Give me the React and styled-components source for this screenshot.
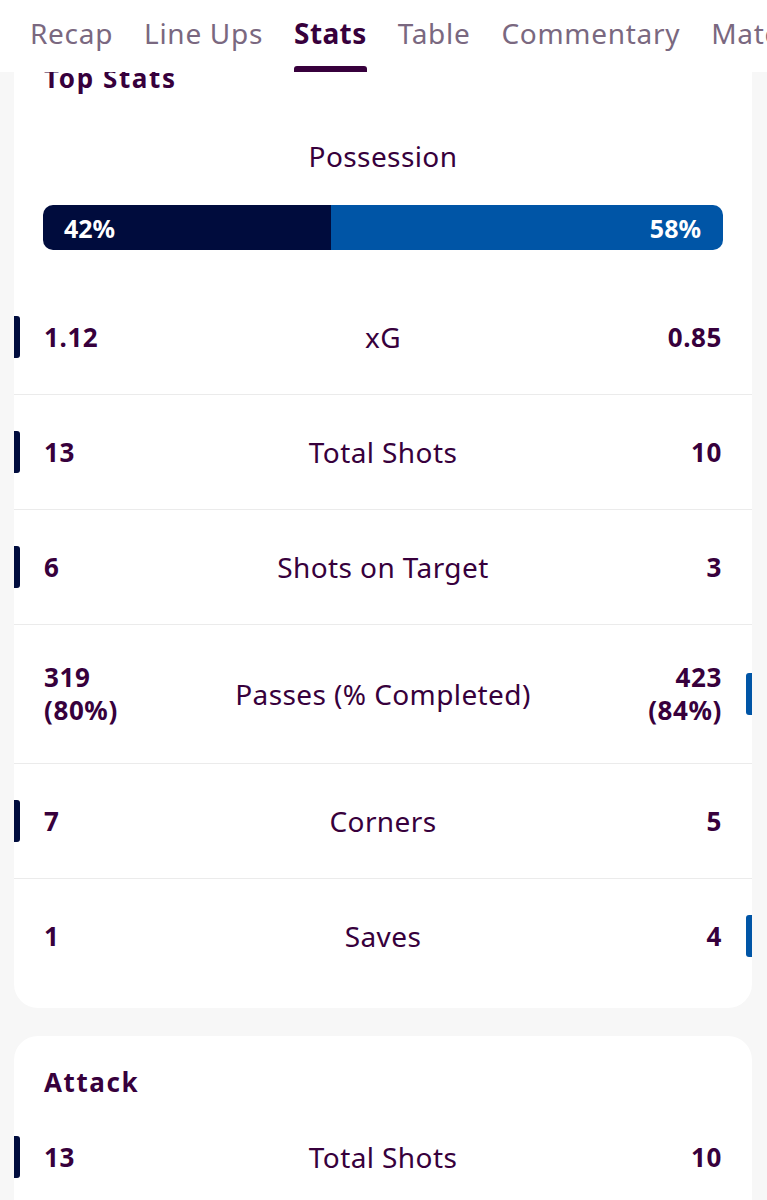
import React from "react";
import styled, { createGlobalStyle } from "styled-components";

const Global = createGlobalStyle`
  html, body { margin: 0; padding: 0; background: #f7f7f7; }
  body { font-family: "Noto Sans", "Liberation Sans", sans-serif; color: #37003c; }
  * { box-sizing: border-box; }
`;

const Page = styled.div`
  width: 767px;
  background: #f7f7f7;
`;

const TabBar = styled.nav`
  height: 72px;
  background: #ffffff;
  display: flex;
  gap: 31px;
  padding-left: 30px;
  overflow: hidden;
  white-space: nowrap;
`;

const Tab = styled.div`
  height: 72px;
  display: flex;
  flex-direction: column;
  padding-top: 15px;
  font-size: 28px;
  line-height: 36px;
  letter-spacing: ${(p) => (p.$active ? "0.4px" : "0.7px")};
  font-weight: ${(p) => (p.$active ? 700 : 400)};
  color: ${(p) => (p.$active ? "#37003c" : "#7a6880")};
  flex-shrink: 0;
`;

const Underline = styled.span`
  margin-top: auto;
  height: 6px;
  border-radius: 3px 3px 0 0;
  background: #37003c;
`;

const Scroller = styled.div`
  overflow: hidden;
`;

const Content = styled.div`
  margin-top: -40px;
  display: flex;
  flex-direction: column;
  gap: 28px;
  padding: 0 15px 40px 14px;
`;

const Card = styled.section`
  background: #ffffff;
  border-radius: 24px;
  padding: 30px 0 15px;
`;

const Heading = styled.h2`
  margin: 0;
  padding-left: 30px;
  font-size: 26px;
  line-height: 32px;
  letter-spacing: 1.6px;
  font-weight: 700;
  color: #37003c;
`;

const Possession = styled.div`
  padding: 44px 29px 0;
  display: flex;
  flex-direction: column;
  align-items: center;
  gap: 31px;
`;

const Label = styled.div`
  font-size: 28px;
  line-height: 36px;
  letter-spacing: 0.4px;
  font-weight: 400;
  color: #37003c;
  text-align: center;
`;

const Bar = styled.div`
  width: 100%;
  height: 45px;
  border-radius: 10px;
  overflow: hidden;
  display: flex;
`;

const Segment = styled.div`
  background: ${(p) => p.$color};
  display: flex;
  align-items: center;
  justify-content: ${(p) => (p.$right ? "flex-end" : "flex-start")};
  padding: 0 22px 0 21px;
  color: #ffffff;
  font-weight: 700;
  font-size: 25px;
`;

const Rows = styled.div`
  margin-top: ${(p) => p.$offset || 0}px;
`;

const Row = styled.div`
  display: grid;
  grid-template-columns: 6px 1fr auto 1fr 6px;
  column-gap: 24px;
  align-items: center;
  min-height: 114px;
  padding: 36px 0;
  border-bottom: 1px solid #ebebeb;
  &:last-child { border-bottom: none; }
`;

const Indicator = styled.span`
  height: 42px;
  width: 6px;
  background: ${(p) => (p.$show ? p.$color : "transparent")};
  border-radius: ${(p) => (p.$right ? "3px 0 0 3px" : "0 3px 3px 0")};
`;

const Value = styled.div`
  font-size: 26px;
  line-height: 33px;
  letter-spacing: 0.6px;
  font-weight: 700;
  color: #37003c;
  text-align: ${(p) => (p.$right ? "right" : "left")};
`;

const HOME = "#000c3d";
const AWAY = "#0055a6";

const topStats = [
  { label: "xG", home: ["1.12"], away: ["0.85"], lead: "home" },
  { label: "Total Shots", home: ["13"], away: ["10"], lead: "home" },
  { label: "Shots on Target", home: ["6"], away: ["3"], lead: "home" },
  { label: "Passes (% Completed)", home: ["319", "(80%)"], away: ["423", "(84%)"], lead: "away" },
  { label: "Corners", home: ["7"], away: ["5"], lead: "home" },
  { label: "Saves", home: ["1"], away: ["4"], lead: "away" },
];

const attackStats = [
  { label: "Total Shots", home: ["13"], away: ["10"], lead: "home" },
  { label: "Shots on Target", home: ["6"], away: ["3"], lead: "home" },
  { label: "Hit Woodwork", home: ["0"], away: ["1"], lead: "away" },
];

function StatRow({ s }) {
  return (
    <Row>
      <Indicator $show={s.lead === "home"} $color={HOME} />
      <Value>
        {s.home.map((v, i) => (
          <div key={i}>{v}</div>
        ))}
      </Value>
      <Label>{s.label}</Label>
      <Value $right>
        {s.away.map((v, i) => (
          <div key={i}>{v}</div>
        ))}
      </Value>
      <Indicator $right $show={s.lead === "away"} $color={AWAY} />
    </Row>
  );
}

export default function App() {
  const tabs = ["Recap", "Line Ups", "Stats", "Table", "Commentary", "Match Info"];
  return (
    <Page>
      <Global />
      <TabBar>
        {tabs.map((t) => (
          <Tab key={t} $active={t === "Stats"}>
            {t}
            {t === "Stats" && <Underline />}
          </Tab>
        ))}
      </TabBar>
      <Scroller>
        <Content>
          <Card>
            <Heading>Top Stats</Heading>
            <Possession>
              <Label>Possession</Label>
              <Bar>
                <Segment $color={HOME} style={{ width: "42.3%" }}>42%</Segment>
                <Segment $color={AWAY} $right style={{ flex: 1 }}>58%</Segment>
              </Bar>
            </Possession>
            <Rows $offset={30}>
              {topStats.map((s) => (
                <StatRow key={s.label} s={s} />
              ))}
            </Rows>
          </Card>
          <Card>
            <Heading>Attack</Heading>
            <Rows $offset={2}>
              {attackStats.map((s) => (
                <StatRow key={s.label} s={s} />
              ))}
            </Rows>
          </Card>
        </Content>
      </Scroller>
    </Page>
  );
}
